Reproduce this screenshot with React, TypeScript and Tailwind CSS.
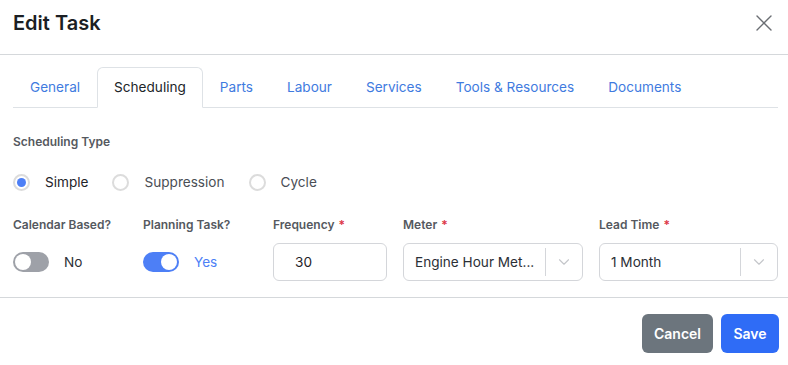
import { useState } from 'react';
import { X, ChevronDown } from 'lucide-react';

const TABS = ['General', 'Scheduling', 'Parts', 'Labour', 'Services', 'Tools & Resources', 'Documents'];
const TYPES = ['Simple', 'Suppression', 'Cycle'];

function Toggle({ on, label }: { on: boolean; label: string }) {
  return (
    <div className="flex items-center h-[38px] gap-[15px]">
      <div
        className={`w-9 h-5 rounded-full p-[2px] flex ${on ? 'bg-[#4d7ff6] justify-end' : 'bg-[#9ea1a8] justify-start'}`}
      >
        <div className="w-4 h-4 rounded-full bg-white" />
      </div>
      <span className={`text-[13.6px] ${on ? 'text-[#4d7ff6]' : 'text-[#2b2f36]'}`}>{label}</span>
    </div>
  );
}

function Label({ text, required }: { text: string; required?: boolean }) {
  return (
    <div className="text-xs font-semibold text-[#555960] h-[19px] mb-[7px]">
      {text}
      {required && <span className="text-[#dc3545] ml-1">*</span>}
    </div>
  );
}

function Select({ value }: { value: string }) {
  return (
    <div className="h-[38px] border border-[#d4d6da] rounded-md flex items-center">
      <span className="flex-1 pl-[11px] text-[13.6px] text-[#2b2f36] truncate">{value}</span>
      <div className="w-px h-[28px] bg-[#d4d6da]" />
      <div className="w-[36px] flex justify-center text-[#c4c6ca]">
        <ChevronDown size={18} strokeWidth={1.5} />
      </div>
    </div>
  );
}

export default function App() {
  const [type, setType] = useState('Simple');
  const [tab, setTab] = useState('Scheduling');

  return (
    <div className="w-[788px] h-[365px] bg-white font-['Inter',sans-serif] text-[#1f2329]">
      <div className="h-[55px] flex items-start justify-between pl-[13px] pr-[10px] pt-[9px] border-b border-[#d5d8db]">
        <h1 className="text-xl font-semibold text-[#1b1f24] leading-[28px]">Edit Task</h1>
        <X size={28} strokeWidth={1.2} className="text-[#6b6e73]" />
      </div>

      <div className="pl-[13px] pr-[10px] pt-[12px]">
        <div className="flex h-[41px] border-b border-[#dee2e6]">
          {TABS.map((t) => (
            <button
              key={t}
              onClick={() => setTab(t)}
              className={`px-4 text-[13.6px] rounded-t-md -mb-px ${
                tab === t
                  ? 'border border-[#dee2e6] border-b-white bg-white text-[#212529]'
                  : 'border border-transparent text-[#3f7be0]'
              }`}
            >
              {t}
            </button>
          ))}
        </div>

        <div className="pt-[26px] text-xs font-semibold text-[#555960]">Scheduling Type</div>

        <div className="flex items-center mt-[23px] h-[18px]">
          {TYPES.map((t) => (
            <label key={t} className="flex items-center mr-[24px] cursor-pointer" onClick={() => setType(t)}>
              <span className="w-[17px] h-[17px] rounded-full border-2 border-[#dcdcdc] flex items-center justify-center">
                {type === t && <span className="w-[9px] h-[9px] rounded-full bg-[#4d7ff6]" />}
              </span>
              <span className={`ml-[15px] text-[13.6px] ${type === t ? 'text-[#1f2329]' : 'text-[#4a4e55]'}`}>{t}</span>
            </label>
          ))}
        </div>

        <div className="grid grid-cols-[114px_114px_114px_180px_1fr] gap-x-4 mt-[26px]">
          <Label text="Calendar Based?" />
          <Label text="Planning Task?" />
          <Label text="Frequency" required />
          <Label text="Meter" required />
          <Label text="Lead Time" required />

          <Toggle on={false} label="No" />
          <Toggle on label="Yes" />
          <div className="h-[38px] border border-[#d4d6da] rounded-md flex items-center pl-[21px] text-[13.6px] text-[#1f2329]">
            30
          </div>
          <Select value="Engine Hour Met..." />
          <Select value="1 Month" />
        </div>
      </div>

      <div className="mt-[16px] border-t border-[#d5d8db] flex justify-end gap-2 pr-[9px] pt-[16px]">
        <button className="h-[39px] w-[71px] rounded-md bg-[#6c757d] text-white text-sm font-semibold">Cancel</button>
        <button className="h-[39px] w-[58px] rounded-md bg-[#2f6cf6] text-white text-sm font-semibold">Save</button>
      </div>
    </div>
  );
}
